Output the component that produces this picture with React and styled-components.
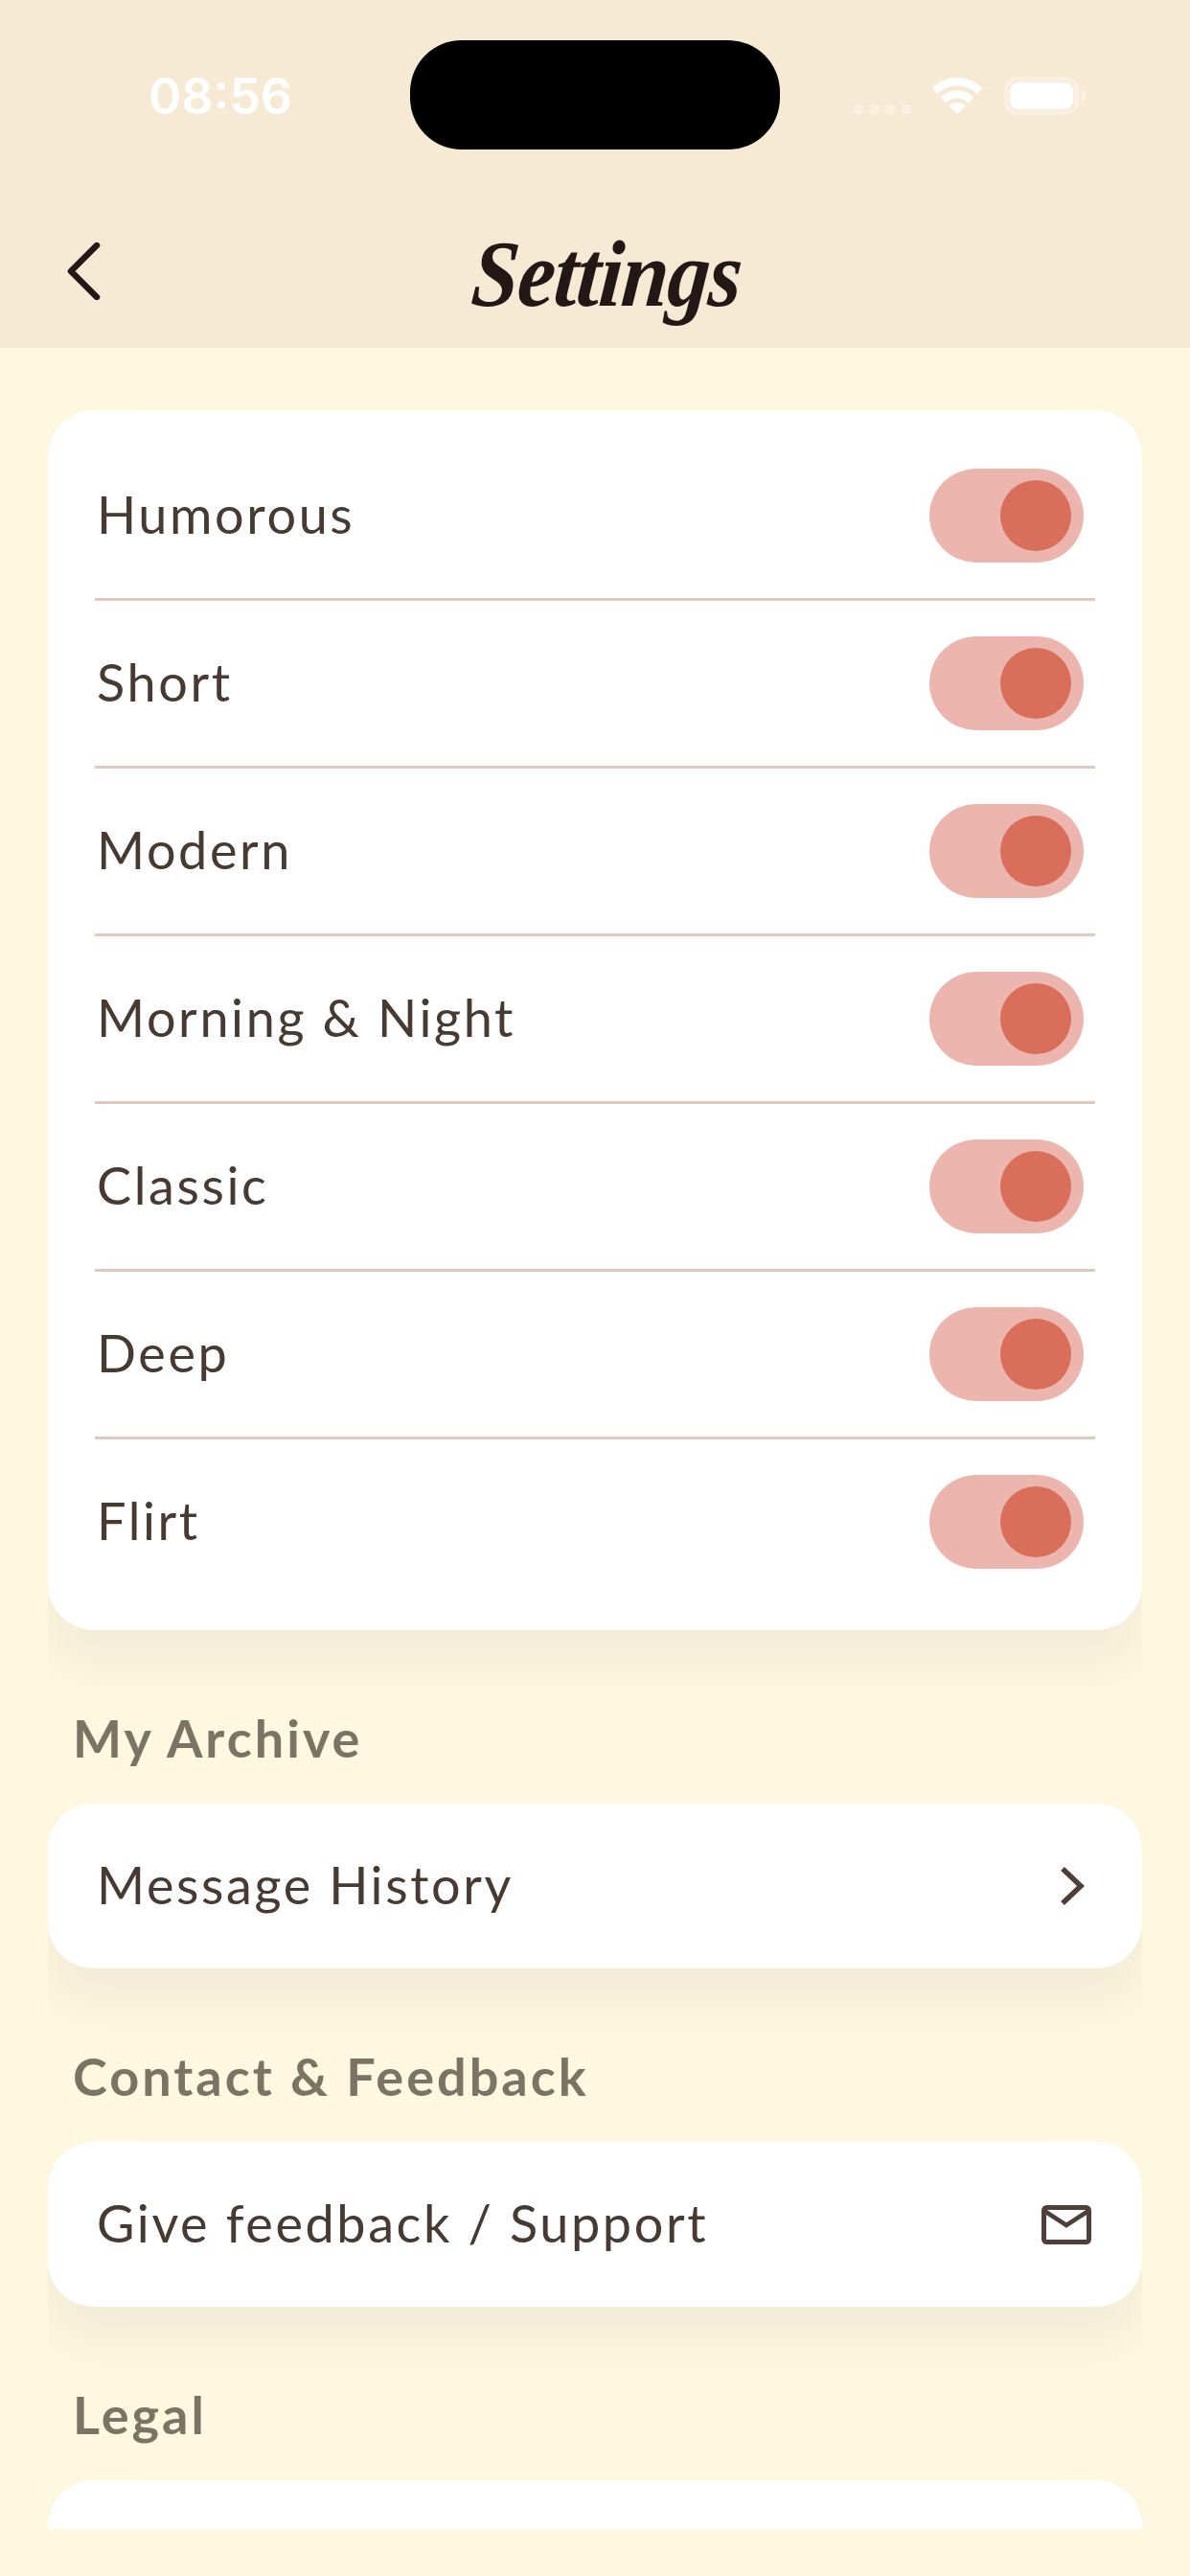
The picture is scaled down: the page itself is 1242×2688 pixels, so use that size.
import React from "react";
import styled, { createGlobalStyle } from "styled-components";

const Global = createGlobalStyle`
  html, body { margin: 0; padding: 0; background: #fff8e1; }
  * { box-sizing: border-box; }
`;

const Page = styled.div`
  width: 1242px;
  height: 2688px;
  display: flex;
  flex-direction: column;
  background: #fff8e1;
  font-family: "Lato", "Noto Sans", sans-serif;
  overflow: hidden;
`;

const Header = styled.header`
  height: 363px;
  flex: none;
  background: #f6ead5;
  padding-top: 42px;
`;

const StatusBar = styled.div`
  display: grid;
  grid-template-columns: 428px 386px 428px;
  height: 114px;
`;

const Time = styled.div`
  font-family: "Inter", "Liberation Sans", sans-serif;
  font-weight: 600;
  font-size: 52px;
  line-height: 38px;
  color: #fff;
  padding-top: 40px;
  padding-left: 155px;
`;

const Island = styled.div`
  background: #000;
  border-radius: 54px;
`;

const StatusIcons = styled.div`
  display: flex;
  align-items: flex-end;
  height: 77px;
  padding-left: 77px;
`;

const Dots = styled.div`
  display: flex;
  gap: 6.6px;
  margin-right: 22px;
`;

const Dot = styled.span`
  width: 10px;
  height: 10px;
  border-radius: 3px;
  background: rgba(255, 255, 255, 0.3);
`;

const Wifi = styled.svg`
  width: 52px;
  height: 38px;
  margin-right: 23px;
  display: block;
`;

const Battery = styled.div`
  position: relative;
  width: 78px;
  height: 40px;
  padding: 6px;
  margin-bottom: -1px;
  border-radius: 14px;
  box-shadow: inset 0 0 0 5px rgba(255, 255, 255, 0.3);
`;

const BatteryFill = styled.div`
  width: 100%;
  height: 100%;
  background: #fff;
  border-radius: 9px;
`;

const BatteryNub = styled.span`
  position: absolute;
  left: 81px;
  top: 14px;
  width: 4px;
  height: 12px;
  background: rgba(255, 255, 255, 0.4);
  border-radius: 0 4px 4px 0;
`;

const NavBar = styled.nav`
  display: grid;
  grid-template-columns: 1fr auto 1fr;
  align-items: center;
  padding: 76px 69px 0;
`;

const BackIcon = styled.svg`
  width: 36px;
  height: 60px;
  display: block;
`;

const Title = styled.h1`
  margin: 12px 0 0 20px;
  font-family: "Liberation Serif", serif;
  font-style: italic;
  font-weight: 700;
  font-size: 88px;
  line-height: 90px;
  letter-spacing: -1px;
  color: #231815;
  transform-origin: 50% 75%;
  transform: skewX(-5deg) scaleY(1.12);
`;

const Scroll = styled.main`
  width: 1142px;
  height: 2276px;
  flex: none;
  margin: 0 50px;
  padding-top: 65px;
  overflow: hidden;
`;

const Card = styled.section`
  background: #fff;
  border-radius: 48px;
  box-shadow: 0 35px 50px rgba(0, 0, 0, 0.055);
  padding: ${(p) => (p.$list ? "24px 49px" : "0 49px 0 51px")};
  ${(p) => p.$plain && "height: 172px; display: flex; align-items: center; justify-content: space-between;"}
`;

const Row = styled.div`
  height: 175px;
  border-bottom: 3px solid ${(p) => (p.$last ? "transparent" : "#e0c7c2")};
  display: flex;
  align-items: center;
  justify-content: space-between;
  padding-left: 2px;
  padding-right: 12px;
`;

const RowLabel = styled.span`
  font-size: 54px;
  font-weight: 400;
  letter-spacing: 2.6px;
  padding-bottom: 4px;
  color: #463a32;
`;

const Track = styled.div`
  width: 161px;
  height: 98px;
  border-radius: 49px;
  background: #ecb6ae;
  display: flex;
  align-items: center;
  justify-content: flex-end;
  padding-right: 13px;
`;

const Knob = styled.span`
  width: 74px;
  height: 74px;
  border-radius: 50%;
  background: #d96f5b;
`;

const SectionLabel = styled.h2`
  margin: 0;
  height: 181px;
  padding: 82px 0 0 26px;
  font-size: 54px;
  line-height: 62px;
  font-weight: 700;
  letter-spacing: 3px;
  color: #7d7364;
`;

const LineIcon = styled.svg`
  display: block;
  flex: none;
  margin-right: ${(p) => p.$inset}px;
`;

const toggles = ["Humorous", "Short", "Modern", "Morning & Night", "Classic", "Deep", "Flirt"];

export default function App() {
  return (
    <Page>
      <Global />
      <Header>
        <StatusBar>
          <Time>08:56</Time>
          <Island />
          <StatusIcons>
            <Dots>
              <Dot />
              <Dot />
              <Dot />
              <Dot />
            </Dots>
            <Wifi viewBox="0 0 52 38">
              <path d="M26 0C16 0 7 4 0 11l5 6c5.500-5.500 13-8.500 21-8.500S41.500 11.500 47 17l5-6C45 4 36 0 26 0Z" fill="#fff" />
              <path d="M26 13.500c-6.500 0-12 2.500-17 7l5 6c3-3 7.500-5 12-5s9 2 12 5l5-6c-5-4.500-10.500-7-17-7Z" fill="#fff" />
              <path d="M26 26c-3.500 0-6 1-8.500 3.500L26 38l8.500-8.500C32 27 29.500 26 26 26Z" fill="#fff" />
            </Wifi>
            <Battery>
              <BatteryFill />
              <BatteryNub />
            </Battery>
          </StatusIcons>
        </StatusBar>
        <NavBar>
          <BackIcon viewBox="0 0 36 60">
            <path d="M32 3 5 30l27 27" fill="none" stroke="#231815" strokeWidth="6.500" strokeLinecap="round" strokeLinejoin="round" />
          </BackIcon>
          <Title>Settings</Title>
          <span />
        </NavBar>
      </Header>
      <Scroll>
        <Card $list>
          {toggles.map((t, i) => (
            <Row key={t} $last={i === toggles.length - 1}>
              <RowLabel>{t}</RowLabel>
              <Track>
                <Knob />
              </Track>
            </Row>
          ))}
        </Card>
        <SectionLabel>My Archive</SectionLabel>
        <Card $plain>
          <RowLabel>Message History</RowLabel>
          <LineIcon $inset={9} width="30" height="44" viewBox="0 0 30 44">
            <path d="M5 4l19 18L5 40" fill="none" stroke="#4f3f3a" strokeWidth="5.500" />
          </LineIcon>
        </Card>
        <SectionLabel>Contact &amp; Feedback</SectionLabel>
        <Card $plain>
          <RowLabel>Give feedback / Support</RowLabel>
          <LineIcon $inset={4} width="52" height="41" viewBox="0 0 52 41">
            <rect x="2.500" y="2.500" width="47" height="36" rx="3" fill="none" stroke="#4f3f3a" strokeWidth="5" />
            <path d="M3 6l23 15L49 6" fill="none" stroke="#4f3f3a" strokeWidth="4.500" />
          </LineIcon>
        </Card>
        <SectionLabel>Legal</SectionLabel>
        <Card $plain />
      </Scroll>
    </Page>
  );
}
